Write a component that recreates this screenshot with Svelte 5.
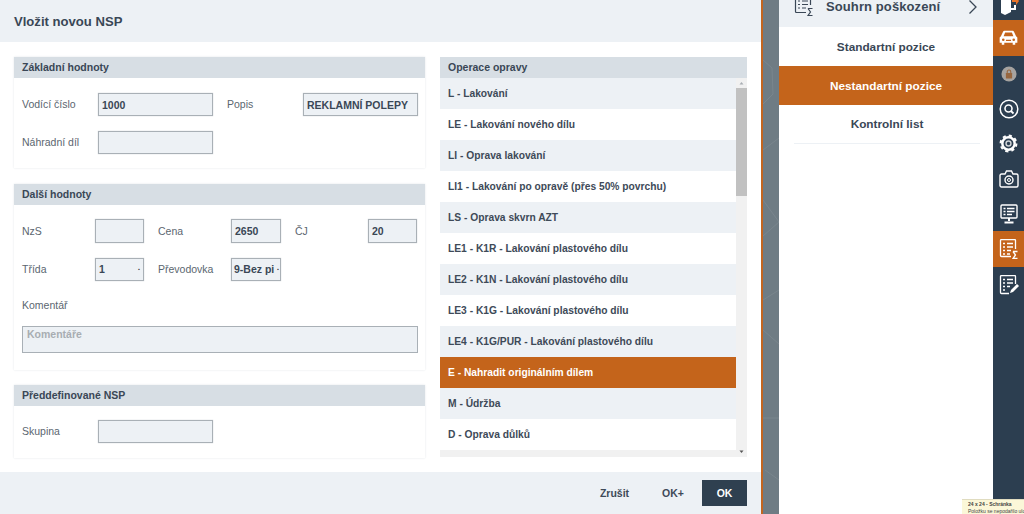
<script>
  const operations = [
    'L - Lakování',
    'LE - Lakování nového dílu',
    'LI - Oprava lakování',
    'LI1 - Lakování po opravě (přes 50% povrchu)',
    'LS - Oprava skvrn AZT',
    'LE1 - K1R - Lakování plastového dílu',
    'LE2 - K1N - Lakování plastového dílu',
    'LE3 - K1G - Lakování plastového dílu',
    'LE4 - K1G/PUR - Lakování plastového dílu',
    'E - Nahradit originálním dílem',
    'M - Údržba',
    'D - Oprava důlků'
  ];
  let selected = $state('E - Nahradit originálním dílem');
  let position = $state('Nestandartní pozice');
  const positions = ['Standartní pozice', 'Nestandartní pozice', 'Kontrolní list'];
</script>

<div class="page">
  <section class="dialog">
    <header class="dialog-head">Vložit novou NSP</header>

    <div class="dialog-body">
      <div class="forms">
        <div class="box">
          <h3>Základní hodnoty</h3>
          <div class="fields basic">
            <span>Vodící číslo</span>
            <div class="input">1000</div>
            <span>Popis</span>
            <div class="input">REKLAMNÍ POLEPY</div>
            <span>Náhradní díl</span>
            <div class="input"></div>
          </div>
        </div>

        <div class="box">
          <h3>Další hodnoty</h3>
          <div class="fields more">
            <span>NzS</span>
            <div class="input"></div>
            <span>Cena</span>
            <div class="input">2650</div>
            <span>ČJ</span>
            <div class="input">20</div>
            <span>Třída</span>
            <div class="input select">1<i>▪</i></div>
            <span>Převodovka</span>
            <div class="input select tight">9-Bez pi<i>▪</i></div>
          </div>
          <div class="comment">
            <span>Komentář</span>
            <div class="area">Komentáře</div>
          </div>
        </div>

        <div class="box">
          <h3>Předdefinované NSP</h3>
          <div class="fields basic single">
            <span>Skupina</span>
            <div class="input"></div>
          </div>
        </div>
      </div>

      <div class="ops">
        <h3>Operace opravy</h3>
        <div class="ops-scroll">
          <ul>
            {#each operations as op, i}
              <li class:odd={i % 2 === 1} class:active={op === selected}>
                <button onclick={() => (selected = op)}>{op}</button>
              </li>
            {/each}
          </ul>
          <div class="scrollbar">
            <svg width="11" height="11" viewBox="0 0 11 11"><path d="M3.5 6.5h4L5.5 4z" fill="#a9aeb3" /></svg>
            <div class="track"><div class="thumb"></div></div>
            <svg width="11" height="11" viewBox="0 0 11 11"><path d="M3.5 4.5h4L5.5 7z" fill="#555" /></svg>
          </div>
        </div>
      </div>
    </div>

    <footer class="dialog-foot">
      <button class="plain">Zrušit</button>
      <button class="plain plus">OK+</button>
      <button class="primary">OK</button>
    </footer>
  </section>

  <div class="strip">
    <svg width="16" height="514" viewBox="0 0 16 514" fill="none" stroke="#7a868d" stroke-width="1">
      <path d="M0 60l9 8 1 26-10 10M0 150l16-12M0 200l16 22M0 236l16-14M0 300l16-10M0 330l16 14M0 418h16M2 470l14 10" />
    </svg>
  </div>

  <aside class="panel">
    <div class="summary">
      <svg class="sum-icon" width="20" height="20" viewBox="0 0 20 20" fill="none" stroke="#3a4756" stroke-width="1.2">
        <path d="M12 16.5H2.500a1 1 0 0 1-1-1V1.500a1 1 0 0 1 1-1h13a1 1 0 0 1 1 1V9" />
        <path d="M4 5h2M8 5h6M4 8.500h2M8 8.500h6M4 12h2M8 12h4M14 12.500h4.500M18.500 19.500H14l2.500-3.500-2.500-3.500" />
      </svg>
      <span>Souhrn poškození</span>
      <svg class="chev" width="10" height="16" viewBox="0 0 10 16" fill="none" stroke="#3a4756" stroke-width="1.300"><path d="M1.500 1.500L8 8l-6.500 6.500" /></svg>
    </div>
    {#each positions as p}
      <button class="pos" class:active={p === position} onclick={() => (position = p)}>{p}</button>
    {/each}
  </aside>

  <nav class="rail">
    <div class="rail-item">
      <svg width="22" height="24" viewBox="0 0 22 24"><path d="M3 1h10v20l-6 3-4-2z" fill="#fff" /><path d="M13 3h5v6h-2V5h-3zM13 17h3v-3h2v5h-5z" fill="#fff" /><path d="M14 9h4V6l3 4-3 4v-3h-4z" fill="#e8742a" /></svg>
    </div>
    <div class="rail-item on">
      <svg width="19" height="16" viewBox="0 0 22 19" fill="#fff"><path d="M6 1h10q1 0 1.500 1L20 7.500l1.500 1.500v6H19v2.500h-3V15H6v2.500H3V15H.5V9L2 7.500 4.500 2Q5 1 6 1zM7 3L5.200 7.500h11.600L15 3zM4.800 10a1.500 1.500 0 1 0 0 3.100 1.500 1.500 0 0 0 0-3.100zm12.400 0a1.500 1.500 0 1 0 0 3.100 1.500 1.500 0 0 0 0-3.100zM8 11.500v1.500h6v-1.500z" fill-rule="evenodd" /></svg>
    </div>
    <div class="rail-item">
      <svg width="16" height="16" viewBox="0 0 18 18"><circle cx="9" cy="9" r="8.500" fill="#a6a3a0" /><rect x="5.500" y="8" width="7" height="6" rx=".5" fill="#96663f" /><path d="M7 8V6.500a2 2 0 0 1 4 0V8" fill="none" stroke="#96663f" stroke-width="1.200" /></svg>
    </div>
    <div class="rail-item">
      <svg width="20" height="20" viewBox="0 0 20 20" fill="none" stroke="#fff"><circle cx="10" cy="10" r="8.800" stroke-width="1.500" /><circle cx="9.500" cy="9.500" r="3.500" stroke-width="1.600" /><path d="M12 12l2.500 2.500" stroke-width="1.800" /></svg>
    </div>
    <div class="rail-item">
      <svg width="19" height="19" viewBox="0 0 20 20" fill="none" stroke="#fff"><circle cx="10" cy="10" r="6.500" stroke-width="2.600" /><circle cx="10" cy="10" r="8.300" stroke-width="2.200" stroke-dasharray="3.300 3.220" /><circle cx="10" cy="10" r="2.600" stroke="#cfd3d6" stroke-width="1.500" /></svg>
    </div>
    <div class="rail-item">
      <svg width="20" height="18" viewBox="0 0 20 18" fill="none" stroke="#fff" stroke-width="1.400"><path d="M1 5.500a1.500 1.500 0 0 1 1.500-1.500H6l1.500-3h5L14 4h3.500A1.500 1.500 0 0 1 19 5.500v10a1.500 1.500 0 0 1-1.500 1.500h-15A1.500 1.500 0 0 1 1 15.500z" /><circle cx="10" cy="10" r="4" /><circle cx="10" cy="10" r="1.500" stroke-width="1" /></svg>
    </div>
    <div class="rail-item">
      <svg width="20" height="20" viewBox="0 0 20 20" fill="none" stroke="#fff"><rect x="2" y="1" width="16" height="13" rx="1" stroke-width="1.400" /><path d="M4.500 4.500h2M8 4.500h7.500M4.500 7.500h2M8 7.500h7.500M4.500 10.500h2M8 10.500h5" stroke-width="1.300" /><path d="M10 14v3M5.500 18.500h9" stroke-width="2" /></svg>
    </div>
    <div class="rail-item on">
      <svg width="20" height="20" viewBox="0 0 20 20" fill="none" stroke="#fff" stroke-width="1.300"><path d="M12 17.500H2.500a1 1 0 0 1-1-1v-15a1 1 0 0 1 1-1h13a1 1 0 0 1 1 1V10" /><path d="M4 4.500h2M8 4.500h6M4 8h2M8 8h6M4 11.500h2M8 11.500h4M4 15h2M8 15h3M14 12.500h4.500M18.500 19.500H14l2.500-3.500-2.500-3.500" /></svg>
    </div>
    <div class="rail-item">
      <svg width="20" height="20" viewBox="0 0 20 20" fill="none" stroke="#fff" stroke-width="1.300"><path d="M10 18.500H2.500a1 1 0 0 1-1-1v-16a1 1 0 0 1 1-1h13a1 1 0 0 1 1 1V9" /><path d="M4 4.500h2M8 4.500h6M4 8h2M8 8h6M4 11.500h2M8 11.500h3M4 15h2" /><path d="M11 18l1-3 6-6 2 2-6 6z" fill="#fff" stroke="none" /></svg>
    </div>
  </nav>

  <div class="tooltip">
    <b>24 x 24 - Schránka</b>
    <span>Položku se nepodařilo uložit</span>
  </div>
</div>

<style>
  :global(body) {
    margin: 0;
    overflow: hidden;
  }

  .page {
    position: relative;
    display: flex;
    width: 1024px;
    height: 514px;
    overflow: hidden;
    font-family: "Liberation Sans", Arial, sans-serif;
    color: #3a4756;
    background: #fff;
  }

  button {
    font: inherit;
    border: 0;
    background: none;
    color: inherit;
    padding: 0;
    cursor: pointer;
  }

  h3 {
    margin: 0;
    height: 21px;
    line-height: 21px;
    padding-left: 8px;
    font-size: 10.500px;
    font-weight: 700;
    color: #3a4756;
    background: #d7dee4;
  }

  .dialog {
    display: flex;
    flex-direction: column;
    width: 761px;
    flex: none;
    background: #fff;
    border-right: 2px solid #c4651f;
  }

  .dialog-head {
    height: 42px;
    flex: none;
    padding-left: 14px;
    line-height: 44px;
    font-size: 13.100px;
    font-weight: 700;
    background: #edf1f5;
  }

  .dialog-body {
    flex: 1;
    display: flex;
    gap: 15px;
    padding: 15px 14px 0;
  }

  .forms {
    width: 411px;
    flex: none;
    display: flex;
    flex-direction: column;
    gap: 16px;
  }

  .box {
    box-shadow: 0 0 2px rgba(60, 80, 100, 0.14);
  }

  .box:nth-child(1) { height: 111px; }
  .box:nth-child(2) { height: 186px; }
  .box:nth-child(3) { height: 73px; margin-top: -1px; }

  .fields {
    display: grid;
    align-items: center;
    column-gap: 14px;
    font-size: 10.500px;
    color: #5b6670;
  }

  .basic {
    grid-template-columns: 62px 115px 62px 115px;
    grid-auto-rows: 23px;
    row-gap: 15px;
    padding: 15px 8px 0;
  }

  .basic.single {
    padding-top: 14px;
  }

  .basic > span {
    position: relative;
    top: -1px;
  }

  .more {
    grid-template-columns: 59px 49px 59px 50px 59px 49px;
    grid-auto-rows: 23.500px;
    row-gap: 15px;
    padding: 14px 8px 0;
  }

  .input {
    box-sizing: border-box;
    height: 100%;
    padding: 0 3px;
    display: flex;
    align-items: center;
    justify-content: space-between;
    white-space: nowrap;
    font-size: 10.500px;
    font-weight: 700;
    color: #3a4756;
    background: #edf1f5;
    border: 1px solid #a9b0b6;
    box-shadow: 0 0 1px rgba(60, 80, 100, 0.3);
  }

  .select { padding: 0 3px; }
  .select i { font-style: normal; font-size: 5px; color: #444; }
  .tight { padding: 0 1px 0 2px; }

  .comment {
    padding: 18px 7px 0 8px;
    font-size: 10.500px;
    color: #5b6670;
  }

  .area {
    box-sizing: border-box;
    height: 27px;
    margin-top: 15px;
    padding: 1px 4px;
    font-weight: 700;
    color: #a8adb2;
    background: #edf1f5;
    border: 1px solid #a9b0b6;
  }

  .ops {
    width: 307px;
    flex: none;
  }

  .ops-scroll {
    display: flex;
    height: 379px;
    background: #f1f1f1;
  }

  ul {
    list-style: none;
    margin: 0;
    padding: 0;
    width: 296px;
    flex: none;
  }

  li {
    height: 31px;
    background: #edf1f5;
  }

  li.odd {
    background: #fff;
  }

  li button {
    display: block;
    width: 100%;
    height: 100%;
    padding: 0 0 1px 8px;
    text-align: left;
    font-size: 10.250px;
    font-weight: 700;
    color: #3e4a58;
  }

  li.active {
    background: #c4641b;
  }

  li.active button {
    color: #fff;
  }

  .scrollbar {
    width: 11px;
    display: flex;
    flex-direction: column;
  }

  .track {
    flex: 1;
  }

  .thumb {
    height: 108px;
    margin-top: -1px;
    background: #c1c1c1;
  }

  .dialog-foot {
    height: 42px;
    flex: none;
    display: flex;
    align-items: center;
    justify-content: flex-end;
    padding-right: 14px;
    font-size: 10.500px;
    font-weight: 700;
    background: #edf1f5;
  }

  .plain {
    color: #3e4a58;
  }

  .plus {
    margin-left: 33px;
    margin-right: 18px;
  }

  .primary {
    width: 45px;
    height: 26px;
    color: #fff;
    background: #2f4050;
  }

  .strip {
    width: 16px;
    flex: none;
    background: #6f7c84;
  }

  .panel {
    width: 214px;
    flex: none;
    display: flex;
    flex-direction: column;
    background: #fff;
  }

  .summary {
    position: relative;
    height: 27px;
    flex: none;
    padding-left: 47px;
    font-size: 13px;
    font-weight: 700;
    letter-spacing: 0.100px;
    line-height: 13px;
    background: #edf1f5;
  }

  .sum-icon {
    position: absolute;
    left: 15px;
    top: -4px;
  }

  .chev {
    position: absolute;
    left: 189px;
    top: -1px;
  }

  .pos {
    height: 39px;
    flex: none;
    font-size: 11.800px;
    font-weight: 700;
    color: #3a4756;
  }

  .pos.active {
    color: #fff;
    background: #c4641b;
  }

  .pos:last-child {
    margin: 0 13px 0 15px;
    border-bottom: 1px solid #edf1f5;
  }

  .rail {
    flex: 1;
    display: flex;
    flex-direction: column;
    margin-top: -15px;
    background: #2c3e50;
  }

  .rail-item {
    height: 35px;
    flex: none;
    display: flex;
    align-items: center;
    justify-content: center;
  }

  .rail-item.on {
    height: 36px;
    background: #c4641b;
  }

  .tooltip {
    position: absolute;
    right: 0;
    bottom: 0;
    width: 56px;
    height: 13px;
    padding: 1px 0 0 6px;
    overflow: hidden;
    white-space: nowrap;
    font-size: 5px;
    line-height: 7px;
    color: #444;
    background: #fbf7d8;
    border-top: 1px solid #e0dcc0;
  }

  .tooltip b,
  .tooltip span {
    display: block;
  }
</style>
